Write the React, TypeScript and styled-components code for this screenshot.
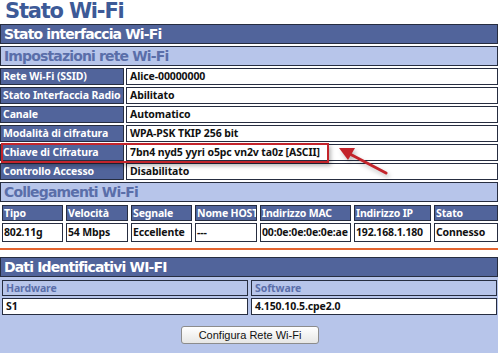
import React from "react";
import styled, { createGlobalStyle } from "styled-components";

const GlobalStyle = createGlobalStyle`
  html, body { margin: 0; padding: 0; background: #ffffff; }
  body {
    font-family: "DejaVu Sans", Verdana, sans-serif;
  }
`;

const DARK = "#51649b";
const LIGHT = "#b7c5ea";
const LIGHT_TEXT = "#5a6ea9";
const EDGE = "#262d40";
const CELL_FONT = `"Noto Sans", "Liberation Sans", sans-serif`;

const Page = styled.div`
  width: 498px;
  height: 353px;
  display: flex;
  flex-direction: column;
  position: relative;
  overflow: hidden;
`;

const Title = styled.h1`
  margin: 0;
  height: 24px;
  padding-left: 5px;
  font-size: 21px;
  line-height: 22px;
  letter-spacing: -1.2px;
  font-weight: bold;
  color: #3d5a97;
`;

const Frame = styled.div`
  display: flex;
  flex-direction: column;
  gap: 2px;
`;

const Bar = styled.div<{ $tone: "dark" | "light" }>`
  height: 20px;
  box-sizing: border-box;
  border: 1px solid ${EDGE};
  background: ${(p) => (p.$tone === "dark" ? DARK : LIGHT)};
  color: ${(p) => (p.$tone === "dark" ? "#ffffff" : LIGHT_TEXT)};
  font-size: 14px;
  font-weight: bold;
  line-height: 18px;
  letter-spacing: -0.85px;
  padding-left: 3px;
  white-space: nowrap;
`;

const KVGrid = styled.div`
  display: grid;
  grid-template-columns: 124px 1fr;
  column-gap: 2px;
  row-gap: 2px;
`;

const Cell = styled.div<{ $kind: "label" | "value" | "soft" }>`
  box-sizing: border-box;
  height: ${(p) => (p.$kind === "soft" ? "16px" : "17px")};
  border: 1px solid ${EDGE};
  background: ${(p) =>
    p.$kind === "label" ? DARK : p.$kind === "soft" ? LIGHT : "#ffffff"};
  color: ${(p) =>
    p.$kind === "label" ? "#ffffff" : p.$kind === "soft" ? LIGHT_TEXT : "#111111"};
  font-family: ${CELL_FONT};
  font-size: 10.5px;
  font-weight: bold;
  line-height: 15px;
  letter-spacing: -0.1px;
  padding-left: ${(p) => (p.$kind === "label" ? "2px" : "3px")};
  white-space: nowrap;
  overflow: hidden;
`;

const Row = styled.div`
  display: contents;
`;

const Marker = styled.div`
  position: absolute;
  left: 1px;
  top: 143px;
  width: 328px;
  height: 20px;
  box-sizing: border-box;
  border: 2px solid #c3242b;
  box-shadow: 2px 3px 4px rgba(0, 0, 0, 0.28);
  pointer-events: none;
`;

const Arrow = styled.svg`
  position: absolute;
  left: 334px;
  top: 144px;
  pointer-events: none;
  filter: drop-shadow(2px 3px 2px rgba(0, 0, 0, 0.25));
`;

const LinksGrid = styled.div`
  display: grid;
  grid-template-columns: 61px 62px 61px 62px 91px 77px 1fr;
  column-gap: 3px;
  row-gap: 2px;
  padding-left: 2px;
  margin-top: 1px;
`;

const HeadCell = styled.div`
  box-sizing: border-box;
  height: 16px;
  border: 1px solid ${EDGE};
  background: ${DARK};
  color: #ffffff;
  font-family: ${CELL_FONT};
  font-size: 10.5px;
  font-weight: bold;
  line-height: 14px;
  letter-spacing: -0.15px;
  padding-left: 1px;
  white-space: nowrap;
  overflow: hidden;
`;

const DataCell = styled.div`
  box-sizing: border-box;
  height: 19px;
  border: 1px solid ${EDGE};
  background: #ffffff;
  color: #111111;
  font-family: ${CELL_FONT};
  font-size: 10.5px;
  font-weight: bold;
  line-height: 17px;
  letter-spacing: -0.15px;
  padding-left: 1px;
  white-space: nowrap;
  overflow: hidden;
`;

const Separator = styled.hr`
  margin: 6px 0 7px 0;
  border: 0;
  height: 2px;
  background: #e3642f;
`;

const Panel = styled.div`
  flex: 1;
  background: ${LIGHT};
  display: flex;
  flex-direction: column;
`;

const IdGrid = styled.div`
  display: grid;
  grid-template-columns: 246px 1fr;
  column-gap: 3px;
  row-gap: 2px;
  padding: 3px 1px 0 2px;
`;

const ButtonRow = styled.div`
  display: flex;
  justify-content: center;
  padding-top: 11px;
`;

const Button = styled.button`
  width: 138px;
  height: 18px;
  box-sizing: border-box;
  border: 1px solid #8c8c8c;
  border-radius: 3px;
  background: linear-gradient(#ffffff, #e7e7e5);
  font-family: "Liberation Sans", Arial, sans-serif;
  font-size: 11px;
  line-height: 14px;
  color: #111111;
  padding: 0;
  margin-left: 2px;
`;

const settings: [string, string][] = [
  ["Rete Wi-Fi (SSID)", "Alice-00000000"],
  ["Stato Interfaccia Radio", "Abilitato"],
  ["Canale", "Automatico"],
  ["Modalità di cifratura", "WPA-PSK TKIP 256 bit"],
  ["Chiave di Cifratura", "7bn4 nyd5 yyri o5pc vn2v ta0z [ASCII]"],
  ["Controllo Accesso", "Disabilitato"],
];

const linkHeads = ["Tipo", "Velocità", "Segnale", "Nome HOST", "Indirizzo MAC", "Indirizzo IP", "Stato"];
const linkData = ["802.11g", "54 Mbps", "Eccellente", "---", "00:0e:0e:0e:0e:ae", "192.168.1.180", "Connesso"];

export default function App() {
  return (
    <>
      <GlobalStyle />
      <Page>
        <Title>Stato Wi-Fi</Title>
        <Frame>
          <Bar $tone="dark">Stato interfaccia Wi-Fi</Bar>
          <Bar $tone="light">Impostazioni rete Wi-Fi</Bar>
          <KVGrid>
            {settings.map(([k, v]) => (
              <Row key={k}>
                <Cell $kind="label">{k}</Cell>
                <Cell $kind="value">{v}</Cell>
              </Row>
            ))}
          </KVGrid>
          <Bar $tone="light">Collegamenti Wi-Fi</Bar>
          <LinksGrid>
            {linkHeads.map((h) => (
              <HeadCell key={h}>{h}</HeadCell>
            ))}
            {linkData.map((d, i) => (
              <DataCell key={i}>{d}</DataCell>
            ))}
          </LinksGrid>
        </Frame>
        <Separator />
        <Panel>
          <Bar $tone="dark">Dati Identificativi WI-FI</Bar>
          <IdGrid>
            <Cell $kind="soft">Hardware</Cell>
            <Cell $kind="soft">Software</Cell>
            <Cell $kind="value">S1</Cell>
            <Cell $kind="value">4.150.10.5.cpe2.0</Cell>
          </IdGrid>
          <ButtonRow>
            <Button type="button">Configura Rete Wi-Fi</Button>
          </ButtonRow>
        </Panel>
        <Marker />
        <Arrow width="60" height="34" viewBox="0 0 60 34">
          <line x1="52" y1="29" x2="14" y2="9" stroke="#c3242b" strokeWidth="3" strokeLinecap="round" />
          <polygon points="5,4 21,4 14,16" fill="#c3242b" />
        </Arrow>
      </Page>
    </>
  );
}
